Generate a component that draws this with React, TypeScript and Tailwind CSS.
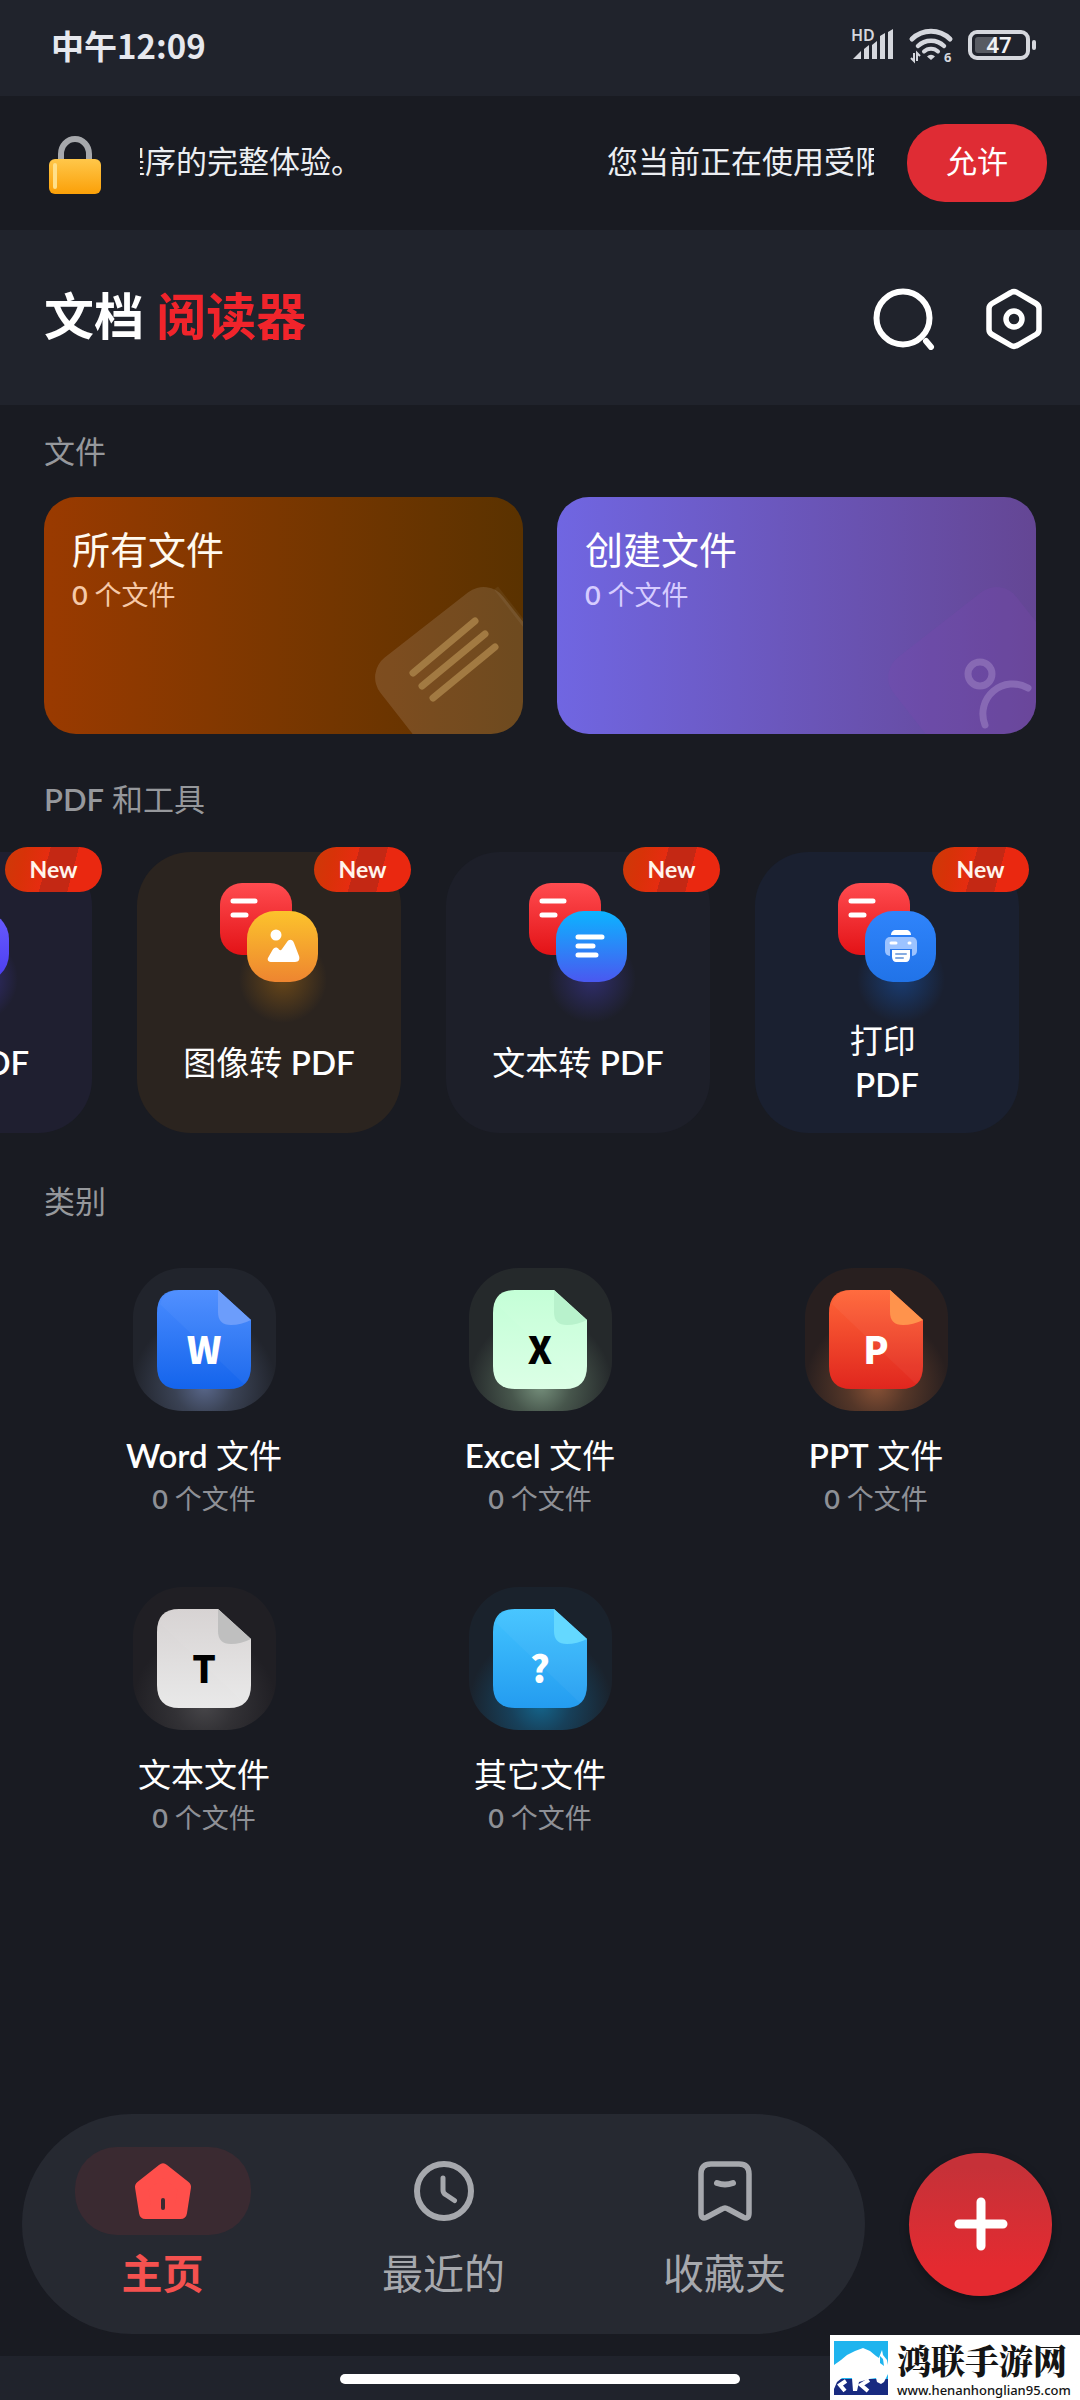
import type { ReactNode } from 'react';

interface Tool {
  id: string;
  label: string[];
  tile: string;
  top: string;
  bottom: string;
  glow: string;
  glyph: ReactNode;
}

interface Category {
  id: string;
  name: string;
  letter: string;
  letterColor: string;
  tile: string;
  top: string;
  bottom: string;
  fold: string;
}

const tools: Tool[] = [
  {
    id: 'merge',
    label: ['合并 PDF'],
    tile: 'bg-[#1f1f30]',
    top: '#6a5cff',
    bottom: '#4a3df0',
    glow: '#5a4cff',
    glyph: <path d="M54 54h18M54 63h18M54 72h18" stroke="#fff" strokeWidth="5" strokeLinecap="round" />,
  },
  {
    id: 'image',
    label: ['图像转 PDF'],
    tile: 'bg-[#2b241f]',
    top: '#fcc32c',
    bottom: '#ee8530',
    glow: '#c47a10',
    glyph: (
      <g fill="#fff">
        <circle cx="56" cy="52" r="5.5" />
        <path d="M52 79h23c4 0 5-3 4-6l-5-13c-1.500-4-5-4-7-1l-5 7c-1 1.500-2 1.500-3 0.500c-2-3-5-2.500-6.500 0.500l-4 7c-2 3 0 5 3.500 5z" />
      </g>
    ),
  },
  {
    id: 'text',
    label: ['文本转 PDF'],
    tile: 'bg-[#1d1f29]',
    top: '#0cb4ff',
    bottom: '#4a58f0',
    glow: '#4a42d0',
    glyph: <path d="M49 54h24M49 63h15M49 72h18" stroke="#fff" strokeWidth="5" strokeLinecap="round" />,
  },
  {
    id: 'print',
    label: ['打印\u00a0', 'PDF'],
    tile: 'bg-[#1a2030]',
    top: '#2f84fb',
    bottom: '#2173e8',
    glow: '#1767d8',
    glyph: (
      <g>
        <path d="M53 52c0-3 2-5 5-5h10c3 0 5 2 5 5z" fill="#fff" />
        <rect x="47" y="54" width="32" height="19" rx="5" fill="#9cc3ff" />
        <path d="M53 60h5M71 60h1" stroke="#fff" strokeWidth="3" strokeLinecap="round" />
        <path d="M52 66h22v8c0 4-2 6-5 6h-12c-3 0-5-2-5-6z" fill="#2878ee" />
        <path d="M54 67h18v7c0 3-2 5-4 5h-10c-2 0-4-2-4-5z" fill="#fff" />
        <path d="M58 71h10M58 75h7" stroke="#86abe0" strokeWidth="2" strokeLinecap="round" />
      </g>
    ),
  },
];

const categories: Category[] = [
  {
    id: 'word',
    name: 'Word 文件',
    letter: 'W',
    letterColor: '#ffffff',
    tile: 'bg-[radial-gradient(circle_at_50%_82%,#5a688c_0%,#3a4254_22%,#21242c_52%)]',
    top: '#4a8cff',
    bottom: '#1464ec',
    fold: '#6c9dfb',
  },
  {
    id: 'excel',
    name: 'Excel 文件',
    letter: 'X',
    letterColor: '#000000',
    tile: 'bg-[radial-gradient(circle_at_50%_82%,#76907c_0%,#47564c_22%,#25292b_52%)]',
    top: '#c2ffd6',
    bottom: '#dcffe6',
    fold: '#b8f2cc',
  },
  {
    id: 'ppt',
    name: 'PPT 文件',
    letter: 'P',
    letterColor: '#ffffff',
    tile: 'bg-[radial-gradient(circle_at_50%_82%,#8a5236_0%,#543628_22%,#281f1f_52%)]',
    top: '#ff6638',
    bottom: '#e0261e',
    fold: '#ff934c',
  },
  {
    id: 'txt',
    name: '文本文件',
    letter: 'T',
    letterColor: '#000000',
    tile: 'bg-[radial-gradient(circle_at_50%_82%,#48474a_0%,#323135_22%,#201f24_52%)]',
    top: '#d6d2d2',
    bottom: '#e9e9e9',
    fold: '#bfbfbf',
  },
  {
    id: 'other',
    name: '其它文件',
    letter: '?',
    letterColor: '#ffffff',
    tile: 'bg-[radial-gradient(circle_at_50%_82%,#14658c_0%,#17405a_22%,#1a222c_52%)]',
    top: '#42c4ff',
    bottom: '#249cf0',
    fold: '#64d8ff',
  },
];

// Latin letters and digits are set bolder than the Chinese around them
function Mixed({ text }: { text: string }) {
  return (
    <>
      {text.split(/([A-Za-z0-9]+)/).map((part, i) =>
        i % 2 === 1 ? (
          <span key={i} className="font-semibold">
            {part}
          </span>
        ) : (
          part
        )
      )}
    </>
  );
}

function StatusBar() {
  return (
    <div className="flex h-24 items-center justify-between bg-[#20232c] pr-[44px] pl-[51px] pb-[6px]">
      <span className="font-['Noto_Sans_CJK_SC',sans-serif] text-[33px] leading-[40px] font-bold text-[#e6e8ee]">
        中午12:09
      </span>
      <div className="flex items-center gap-4 text-[#d5d7dd]">
        <svg className="overflow-visible" width="42" height="34" viewBox="0 0 42 34" fill="currentColor">
          <text x="-1" y="13" fontSize="16" fontWeight="600" fontFamily="Noto Sans, sans-serif">HD</text>
          <path d="M1 31l8-8v8zM12 21l5-4v14h-5zM20 17l5-4v18h-5zM28 8l5-3v26h-5zM36 4l5-3v30h-5z" />
        </svg>
        <svg className="overflow-visible" width="42" height="34" viewBox="0 0 42 34" fill="none" stroke="currentColor">
          <path d="M2 11a27 27 0 0 1 38 0" strokeWidth="5" strokeLinecap="round" />
          <path d="M8 18a18.500 18.500 0 0 1 26 0" strokeWidth="4.500" strokeLinecap="round" />
          <path d="M14 23.500a10 10 0 0 1 14 0" strokeWidth="4" strokeLinecap="round" />
          <path d="M17 28.500a5.500 5.500 0 0 1 8 0l-4 3.500z" fill="currentColor" stroke="none" />
          <path d="M4 25v8l-3-3M7 33v-8l3 3" strokeWidth="2" />
          <text x="34" y="34" fontSize="13" fontWeight="700" fill="currentColor" stroke="none" fontFamily="Noto Sans, sans-serif">6</text>
        </svg>
        <svg className="overflow-visible" width="68" height="32" viewBox="0 0 68 32">
          <rect x="2" y="3" width="58" height="26" rx="7" fill="none" stroke="currentColor" strokeWidth="4" />
          <rect x="7" y="8" width="22" height="16" rx="3" fill="#585b62" />
          <rect x="64" y="11" width="4" height="10" rx="2" fill="currentColor" />
          <text x="31" y="24" textAnchor="middle" fontSize="22" fontWeight="600" fill="#f0f1f4" fontFamily="Noto Sans, sans-serif">47</text>
        </svg>
      </div>
    </div>
  );
}

function PermissionBanner() {
  return (
    <div className="flex h-[134px] items-center bg-[#191b22] pr-[33px] pl-[49px]">
      <svg className="shrink-0" width="52" height="64" viewBox="0 0 52 64">
        <defs>
          <linearGradient id="lock" x1="0" y1="0" x2="0" y2="1">
            <stop offset="0" stopColor="#ffc74a" />
            <stop offset="1" stopColor="#fba008" />
          </linearGradient>
        </defs>
        <path d="M12 32v-9a14 15 0 0 1 28 0v9" fill="none" stroke="#a6a8ac" strokeWidth="6" />
        <rect x="0" y="28" width="52" height="35" rx="6" fill="url(#lock)" />
        <rect x="4" y="32" width="4" height="26" rx="2" fill="#ffe08a" />
      </svg>
      <div className="ml-[39px] flex min-w-0 flex-1 gap-[245px] overflow-hidden pb-1 text-[31px] leading-[44px] whitespace-nowrap text-[#eceef2]">
        <span className="-ml-[26px]">程序的完整体验。</span>
        <span>您当前正在使用受限</span>
      </div>
      <button className="ml-[33px] h-[78px] w-[140px] shrink-0 rounded-[38px] bg-[#df2c34] pb-1 text-[31px] leading-[44px] text-white">
        允许
      </button>
    </div>
  );
}

function Header() {
  return (
    <header className="flex h-[175px] items-center justify-between bg-[#20232c] pr-[37px] pl-[44px]">
      <h1 className="pb-1 text-[50px] leading-[64px] font-bold text-white">
        文档 <span className="text-[#f0242b]">阅读器</span>
      </h1>
      <div className="flex items-center gap-[50px] pt-[2px]">
        <button aria-label="搜索">
          <svg width="62" height="62" viewBox="0 0 62 62" fill="none" stroke="#fff" strokeLinecap="round">
            <circle cx="30" cy="30" r="26.500" strokeWidth="6" />
            <path d="M53 53l5 6" strokeWidth="6" />
          </svg>
        </button>
        <button aria-label="设置">
          <svg width="58" height="62" viewBox="0 0 58 62" fill="none" stroke="#fff" strokeWidth="5.500">
            <path
              d="M26 4.500q3-1.800 6 0l19 11q3 1.800 3 5v21q0 3.200-3 5l-19 11q-3 1.800-6 0l-19-11q-3-1.800-3-5v-21q0-3.200 3-5z"
              strokeLinejoin="round"
            />
            <circle cx="29" cy="31" r="8" />
          </svg>
        </button>
      </div>
    </header>
  );
}

function SectionTitle({ text }: { text: string }) {
  return (
    <h2 className="px-[44px] text-[31px] leading-[48px] font-normal text-[#96989c]">
      <Mixed text={text} />
    </h2>
  );
}

function FileCards() {
  return (
    <div className="mt-[22px] grid grid-cols-2 gap-[34px] px-[44px]">
      <button className="relative flex h-[237px] flex-col items-start overflow-hidden rounded-[32px] bg-linear-to-r from-[#9a3a00] to-[#5a3200] px-[28px] pt-[26px]">
        <span className="text-[38px] leading-[52px] text-[#fffaf0]">所有文件</span>
        <span className="text-[27px] leading-[40px] text-[#f6c9a8]">
          <Mixed text="0 个文件" />
        </span>
        <svg className="absolute right-0 bottom-0 h-[160px] w-[180px]" viewBox="299 77 180 160">
          <rect x="321" y="176" width="156" height="190" rx="25" fill="#fff" opacity="0.120" transform="rotate(-38 321 176)" />
          <path d="M452 91l46 59" stroke="#fff" strokeWidth="5" opacity="0.050" />
          <path d="M369 176l62-52M378 189l63-52M389 201l62-51" stroke="#a27a42" strokeWidth="7" strokeLinecap="round" />
        </svg>
      </button>
      <button className="relative flex h-[237px] flex-col items-start overflow-hidden rounded-[32px] bg-linear-to-r from-[#7066e2] to-[#644694] px-[28px] pt-[26px]">
        <span className="text-[38px] leading-[52px] text-white">创建文件</span>
        <span className="text-[27px] leading-[40px] text-[#d6ccff]">
          <Mixed text="0 个文件" />
        </span>
        <svg className="absolute right-0 bottom-0 h-[160px] w-[180px]" viewBox="299 77 180 160" fill="none">
          <rect x="321" y="176" width="156" height="190" rx="25" fill="#7c48b0" opacity="0.250" transform="rotate(-38 321 176)" />
          <g stroke="#8769b4" strokeWidth="7" strokeLinecap="round">
            <circle cx="423" cy="177" r="12" />
            <path d="M428 228a30 30 0 0 1 43-37" />
          </g>
        </svg>
      </button>
    </div>
  );
}

function ToolIcon({ tool }: { tool: Tool }) {
  return (
    <svg className="overflow-visible" width="98" height="100" viewBox="0 0 98 100" fill="none">
      <defs>
        <linearGradient id="tool-red" x1="0" y1="0" x2="0" y2="1">
          <stop offset="0" stopColor="#ff4c50" />
          <stop offset="1" stopColor="#e31216" />
        </linearGradient>
        <linearGradient id={`tool-${tool.id}`} x1="0" y1="0" x2="0" y2="1">
          <stop offset="0" stopColor={tool.top} />
          <stop offset="1" stopColor={tool.bottom} />
        </linearGradient>
        <radialGradient id={`glow-${tool.id}`}>
          <stop offset="0" stopColor={tool.glow} stopOpacity="0.400" />
          <stop offset="1" stopColor={tool.glow} stopOpacity="0" />
        </radialGradient>
      </defs>
      <circle cx="63" cy="96" r="44" fill={`url(#glow-${tool.id})`} />
      <rect width="72" height="72" rx="22" fill="url(#tool-red)" />
      <path d="M13 18h22M13 32h13" stroke="#fff" strokeWidth="5" strokeLinecap="round" />
      <rect x="27" y="28" width="71" height="71" rx="28" fill={`url(#tool-${tool.id})`} />
      {tool.glyph}
    </svg>
  );
}

function ToolStrip() {
  return (
    <div className="mt-[24px] flex justify-end gap-[45px] overflow-hidden pt-[5px] pr-[61px]">
      {tools.map((tool) => (
        <button
          key={tool.id}
          className={`relative flex h-[281px] w-[264px] shrink-0 flex-col items-center rounded-[54px] pt-[31px] ${tool.tile}`}
        >
          <ToolIcon tool={tool} />
          <span className="absolute -top-[5px] -right-[10px] h-[45px] w-[97px] rounded-full bg-[linear-gradient(105deg,#cc3a08_0%,#d83208_20%,#e62c10_42%,#c42814_42%,#c42814_68%,#ea2810_68%)] text-[23px] leading-[44px] font-bold text-[#fff4ec]">
            New
          </span>
          <span className="mt-[30px] flex h-[98px] flex-col items-center justify-center text-[33px] leading-[44px] text-white">
            {tool.label.map((line) => (
              <span key={line}>
                <Mixed text={line} />
              </span>
            ))}
          </span>
        </button>
      ))}
    </div>
  );
}

function DocIcon({ category }: { category: Category }) {
  return (
    <svg width="94" height="99" viewBox="0 0 94 99">
      <defs>
        <linearGradient id={`doc-${category.id}`} x1="0" y1="0" x2="0" y2="1">
          <stop offset="0" stopColor={category.top} />
          <stop offset="1" stopColor={category.bottom} />
        </linearGradient>
      </defs>
      <path d="M22 0h39l33 30v46q0 23-22 23h-50q-22 0-22-23v-53q0-23 22-23z" fill={`url(#doc-${category.id})`} />
      <path d="M3 14l84 80q7-7 7-18v-46l-33-30h-39q-14 0-19 14z" fill="#fff" opacity="0.040" />
      <path d="M61 0l33 30q-10 5-20 5q-13 0-13-13z" fill={category.fold} />
      <text
        x="47"
        y="74"
        textAnchor="middle"
        fontSize="37"
        fontWeight="900"
        fontFamily="Noto Sans CJK SC, sans-serif"
        fill={category.letterColor}
      >
        {category.letter}
      </text>
    </svg>
  );
}

function CategoryGrid() {
  return (
    <div className="mt-[43px] grid grid-cols-3 gap-y-[68px] px-[36px]">
      {categories.map((category) => (
        <button key={category.id} className="flex flex-col items-center">
          <span className={`flex h-[143px] w-[143px] items-center justify-center rounded-[50px] ${category.tile}`}>
            <DocIcon category={category} />
          </span>
          <span className="mt-[22px] text-[33px] leading-[44px] text-white">
            <Mixed text={category.name} />
          </span>
          <span className="mt-[2px] text-[27px] leading-[40px] text-[#8e9096]">
            <Mixed text="0 个文件" />
          </span>
        </button>
      ))}
    </div>
  );
}

function NavItem({ label, active = false, children }: { label: string; active?: boolean; children: ReactNode }) {
  return (
    <button className={`flex flex-1 flex-col items-center ${active ? 'font-bold text-[#f4514f]' : 'text-[#a6a8ad]'}`}>
      <span className={`flex h-[88px] w-[176px] items-center justify-center rounded-[42px] ${active ? 'bg-[#3a2a31]' : ''}`}>
        {children}
      </span>
      <span className="mt-[11px] text-[41px] leading-[56px]">{label}</span>
    </button>
  );
}

function BottomNav() {
  return (
    <div className="mt-auto flex items-center gap-[44px] pr-[28px] pb-[22px] pl-[22px]">
      <nav className="flex h-[220px] flex-1 rounded-full bg-[#262931] pt-[33px]">
        <NavItem label="主页" active>
          <svg width="60" height="60" viewBox="0 0 60 60" strokeLinecap="round" strokeLinejoin="round">
            <path d="M30 9l21.500 17-4 25.500h-35l-4-25.500z" fill="#ff4f4b" stroke="#ff4f4b" strokeWidth="13" />
            <path d="M30 39v8" stroke="#3a2a31" strokeWidth="4" />
          </svg>
        </NavItem>
        <NavItem label="最近的">
          <svg width="60" height="60" viewBox="0 0 60 60" fill="none" stroke="currentColor" strokeLinecap="round" strokeLinejoin="round">
            <circle cx="30" cy="30" r="27" strokeWidth="6" />
            <path d="M29 17v12q0 3 2.500 4.500l9 6" strokeWidth="5" />
          </svg>
        </NavItem>
        <NavItem label="收藏夹">
          <svg width="60" height="60" viewBox="0 0 60 60" fill="none" stroke="currentColor" strokeLinecap="round" strokeLinejoin="round">
            <path
              d="M6 13q0-10 10-10h28q10 0 10 10v39q0 7-6 4l-15-8q-3-2-6 0l-15 8q-6 3-6-4z"
              strokeWidth="5.500"
            />
            <path d="M22 22q8 3 16 0" strokeWidth="6" />
          </svg>
        </NavItem>
      </nav>
      <button
        aria-label="新建"
        className="flex h-[143px] w-[143px] shrink-0 items-center justify-center rounded-full bg-linear-to-b from-[#c63138] from-10% to-[#e42a30] to-80% shadow-[0_4px_10px_rgba(0,0,0,0.3)]"
      >
        <svg width="54" height="54" viewBox="0 0 54 54" stroke="#fff" strokeWidth="9" strokeLinecap="round">
          <path d="M27 5v44M5 27h44" />
        </svg>
      </button>
    </div>
  );
}

function SiteMark() {
  return (
    <div className="absolute right-0 bottom-0 flex h-[65px] w-[250px] items-center gap-[9px] bg-white pl-[4px]">
      <svg className="shrink-0" width="54" height="54" viewBox="0 0 54 54">
        <rect width="54" height="54" fill="#1fb4ee" />
        <rect y="38" width="54" height="16" fill="#182a80" />
        <path
          d="M0 24l7-5 6-5 8-4 8-3 7 3 6 5 3 2 1-3 2-5 1 5 4 5 1 5v9l-4 8-3 2-4-2-1-4-7 1-10 3-2 9h-4l-1-13-10 0-5 4-3 7h-3z"
          fill="#fff"
        />
        <path d="M46 15l3 3 1 7-4-3z" fill="#1fb4ee" />
        <path d="M12 40l-6 4 5 6M35 39l-8 5 7 6" fill="none" stroke="#fff" strokeWidth="4" />
      </svg>
      <div className="whitespace-nowrap text-[#141414]">
        <div className="font-['Noto_Serif_CJK_SC','Noto_Sans_CJK_SC',serif] text-[34px] leading-[44px] font-black">鸿联手游网</div>
        <div className="font-['Noto_Sans',sans-serif] text-[13px] leading-[16px] font-medium">www.henanhonglian95.com</div>
      </div>
    </div>
  );
}

export default function App() {
  return (
    <div className="relative flex min-h-screen flex-col overflow-hidden bg-[#191b22] font-['Lato','Noto_Sans_CJK_SC',sans-serif]">
      <StatusBar />
      <PermissionBanner />
      <Header />
      <main className="pb-12">
        <section className="pt-[22px]">
          <SectionTitle text="文件" />
          <FileCards />
        </section>
        <section className="pt-[41px]">
          <SectionTitle text="PDF 和工具" />
          <ToolStrip />
        </section>
        <section className="pt-[44px]">
          <SectionTitle text="类别" />
          <CategoryGrid />
        </section>
      </main>
      <BottomNav />
      <div className="flex h-[44px] justify-center bg-[#20232c] pt-[18px]">
        <div className="h-[10px] w-[400px] rounded-full bg-white" />
      </div>
      <SiteMark />
    </div>
  );
}
